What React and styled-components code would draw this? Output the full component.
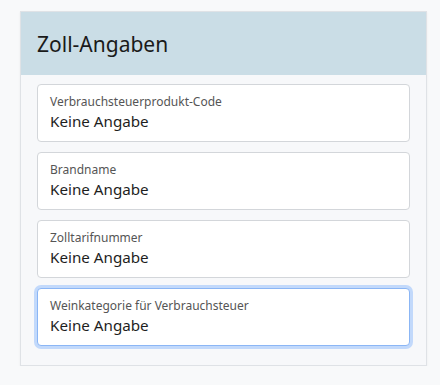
import React from 'react';
import styled, { createGlobalStyle } from 'styled-components';

const GlobalStyle = createGlobalStyle`
  body {
    margin: 0;
    background: #f8f9fa;
    font-family: "Noto Sans", "Open Sans", sans-serif;
  }
`;

const Card = styled.section`
  width: 405px;
  margin: 11px 0 0 20px;
  background: #f7f8fa;
  border: 1px solid #dfe2e6;
  box-shadow: 0 1px 2px rgba(0, 0, 0, 0.06);
`;

const Header = styled.div`
  height: 63px;
  display: flex;
  align-items: center;
  padding: 1px 16px 0;
  box-sizing: border-box;
  background: #cadde6;
  font-size: 21px;
  color: #1a1a1a;
`;

const Body = styled.div`
  display: flex;
  flex-direction: column;
  gap: 10px;
  padding: 9px 16px 19px 16px;
`;

const Field = styled.div`
  height: 58px;
  box-sizing: border-box;
  padding: 9px 12px;
  background: #fff;
  border: 1px solid ${p => (p.$focused ? '#8bb6f5' : '#d3d6da')};
  border-radius: 4px;
  box-shadow: ${p => (p.$focused ? '0 0 0 3px #c2d9fb' : 'none')};
`;

const Label = styled.div`
  font-size: 12px;
  line-height: 16px;
  color: #555;
`;

const Value = styled.div`
  font-size: 15.2px;
  line-height: 22px;
  color: #1e1e1e;
`;

const fields = [
  'Verbrauchsteuerprodukt-Code',
  'Brandname',
  'Zolltarifnummer',
  'Weinkategorie für Verbrauchsteuer',
];

export default function App() {
  return (
    <>
      <GlobalStyle />
      <Card>
        <Header>Zoll-Angaben</Header>
        <Body>
          {fields.map((f, i) => (
            <Field key={f} $focused={i === fields.length - 1}>
              <Label>{f}</Label>
              <Value>Keine Angabe</Value>
            </Field>
          ))}
        </Body>
      </Card>
    </>
  );
}
